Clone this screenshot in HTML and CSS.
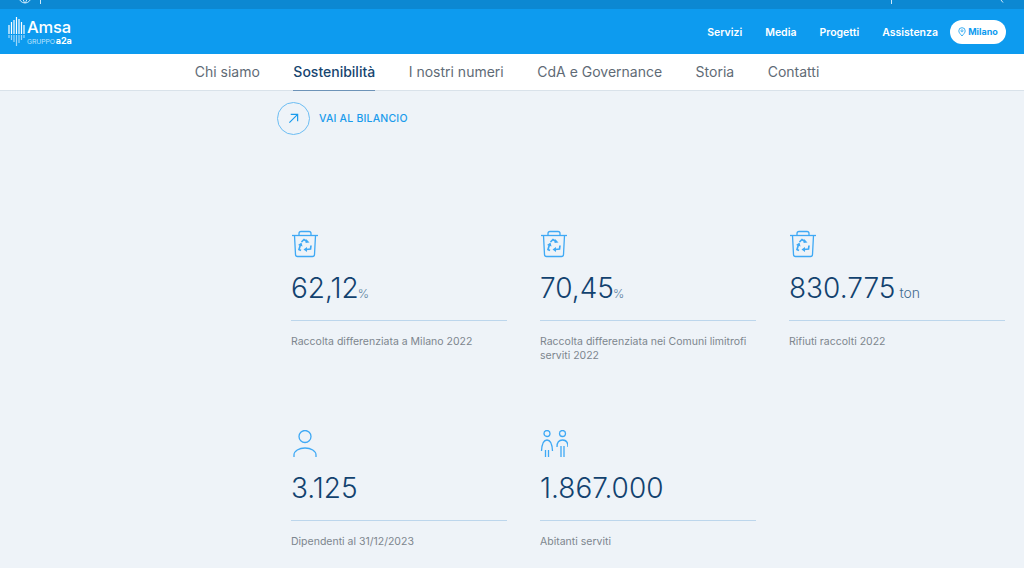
FILE: index.html
```html
<!DOCTYPE html>
<html lang="it">
<head>
<meta charset="utf-8">
<title>Amsa - Sostenibilità</title>
<link rel="stylesheet" href="styles.css">
</head>
<body>
<div class="topbar">
  <div class="topbar-left">
    <svg class="globe" viewBox="0 0 14 14" width="14" height="14"><g transform="translate(0,-10)" fill="none" stroke="#cfe9fb" stroke-width="1"><circle cx="7" cy="7" r="6"/><path d="M1 7h12M7 1c-3 4-3 8 0 12M7 1c3 4 3 8 0 12"/></g></svg>
    <span class="tick"></span>
  </div>
  <div class="topbar-right">
    <span class="tick"></span>
    <svg class="search" viewBox="0 0 12 4" width="12" height="4"><path d="M5 0l2 2.500" fill="none" stroke="#cfe9fb" stroke-width="1"/></svg>
  </div>
</div>
<header class="header">
  <a class="logo">
    <svg class="logo-mark" viewBox="0 0 17 30" width="17" height="30">
      <g stroke="#fff" stroke-width="1.200" fill="none">
        <path d="M1 8v9M3.500 5v12M6 3v14M8.500 0v17M11 2v15M13.500 5v12M16 8v9"/>
        <path opacity=".6" d="M1 18v3M3.500 18v5M6 18v7M8.500 18v11M11 18v8M13.500 18v5M16 18v3"/>
      </g>
    </svg>
    <span class="logo-text">
      <span class="logo-name">Amsa</span>
      <span class="logo-sub">GRUPPO<b>a2a</b></span>
    </span>
  </a>
  <nav class="main-nav">
    <a>Servizi</a>
    <a>Media</a>
    <a>Progetti</a>
    <a>Assistenza</a>
  </nav>
  <a class="city">
    <svg viewBox="0 0 10 12" width="8" height="10"><path d="M5 11C3 8.500 1 6.800 1 4.600a4 4 0 0 1 8 0C9 6.800 7 8.500 5 11z" fill="none" stroke="#0d9bef" stroke-width="1"/><circle cx="5" cy="4.500" r="1.300" fill="none" stroke="#0d9bef" stroke-width=".9"/></svg>
    Milano
  </a>
</header>
<nav class="subnav">
  <a>Chi siamo</a>
  <a class="active">Sostenibilità</a>
  <a>I nostri numeri</a>
  <a>CdA e Governance</a>
  <a>Storia</a>
  <a>Contatti</a>
</nav>
<main class="content">
  <a class="cta">
    <span class="cta-circle">
      <svg viewBox="0 0 12 12" width="11" height="11"><path d="M1.500 10.500L10.500 1.500M3 1.500h7.500V9" fill="none" stroke="#1a9bec" stroke-width="1.300"/></svg>
    </span>
    <span class="cta-label">VAI AL BILANCIO</span>
  </a>
  <section class="stats">
    <article class="stat">
      <svg class="stat-icon" viewBox="0 0 28 28" width="28" height="28"><use href="#bin"/></svg>
      <div class="stat-value">62,12<small class="pct">%</small></div>
      <p class="stat-label">Raccolta differenziata a Milano 2022</p>
    </article>
    <article class="stat">
      <svg class="stat-icon" viewBox="0 0 28 28" width="28" height="28"><use href="#bin"/></svg>
      <div class="stat-value">70,45<small class="pct">%</small></div>
      <p class="stat-label">Raccolta differenziata nei Comuni limitrofi serviti 2022</p>
    </article>
    <article class="stat">
      <svg class="stat-icon" viewBox="0 0 28 28" width="28" height="28"><use href="#bin"/></svg>
      <div class="stat-value">830.775<small class="unit">ton</small></div>
      <p class="stat-label">Rifiuti raccolti 2022</p>
    </article>
    <article class="stat">
      <svg class="stat-icon" viewBox="0 0 28 28" width="28" height="28"><g fill="none" stroke="#3fa9f5" stroke-width="1.300"><circle cx="14" cy="6.500" r="6"/><path d="M3 27v-2c0-4 5-7 11-7s11 3 11 7v2"/></g></svg>
      <div class="stat-value">3.125</div>
      <p class="stat-label">Dipendenti al 31/12/2023</p>
    </article>
    <article class="stat">
      <svg class="stat-icon" viewBox="0 0 28 28" width="28" height="28"><g fill="none" stroke="#3fa9f5" stroke-width="1.300"><circle cx="7" cy="3.500" r="3"/><circle cx="22.500" cy="3.500" r="3"/><path d="M1.500 21c.3-6 2-11 5.500-11s5.200 5 5.500 11"/><path d="M5.500 20v7M8.500 20v7"/><path d="M17 17c0-4 2-7 5.500-7s5.500 3 5.500 7"/><path d="M21 16v11M24 16v11"/></g></svg>
      <div class="stat-value">1.867.000</div>
      <p class="stat-label">Abitanti serviti</p>
    </article>
  </section>
</main>
<svg class="defs" width="0" height="0">
  <symbol id="bin" viewBox="0 0 28 28">
    <g fill="none" stroke="#3fa9f5" stroke-width="1.300">
      <path d="M1 5.500h26"/>
      <path d="M8 5.500V3.500Q8 1.500 10 1.500h8q2 0 2 2v2"/>
      <path d="M3.500 5.500l1 19q.1 2 2 2h15q1.900 0 2-2l1-19"/>
    </g>
    <g fill="none" stroke="#3fa9f5" stroke-width="1.700">
      <path d="M10.500 12l2.500-2.500 3 2"/>
      <path d="M10 20.500l-2-1 1.500-5"/>
      <path d="M20 15.500l-.5 3.500-4.500.5"/>
    </g>
    <g fill="#3fa9f5">
      <path d="M15 9l3.500 3.500-4 .5z"/>
      <path d="M7 15l3.500-2.500 1 4z"/>
      <path d="M16 17v5l-3.500-2.500z"/>
    </g>
  </symbol>
</svg>
</body>
</html>
```
FILE: styles.css
```css
* { box-sizing: border-box; }
html, body { margin: 0; padding: 0; }
body {
  height: 568px;
  overflow: hidden;
  background: #eef3f8;
  font-family: Inter, "Liberation Sans", sans-serif;
  color: #12426f;
}
a { color: inherit; text-decoration: none; }

.topbar {
  height: 9px;
  background: #0c88d2;
  display: flex;
  justify-content: space-between;
  overflow: hidden;
  padding: 0 16px 0 18px;
}
.topbar-left, .topbar-right { display: flex; align-items: flex-start; }
.topbar-left { gap: 8px; }
.topbar-right { gap: 104px; }
.globe { display: block; }
.tick { display: block; width: 1px; height: 4px; background: #cfe9fb; }
.search { display: block; }

.header {
  height: 45px;
  background: #0d9bef;
  display: flex;
  align-items: center;
  padding: 0 18px 0 8px;
  color: #fff;
}
.logo { display: flex; align-items: center; gap: 2px; }
.logo-mark { display: block; }
.logo-text { display: flex; flex-direction: column; padding-top: 4px; }
.logo-name { font-size: 16.500px; font-weight: 500; line-height: 15px; letter-spacing: -.2px; }
.logo-sub { display: flex; align-items: baseline; gap: 1px; font-size: 6.800px; line-height: 11px; color: #bfe4fb; letter-spacing: -.1px; }
.logo-sub b { color: #fff; font-size: 9px; font-weight: 700; line-height: 11px; }
.main-nav {
  margin-left: auto;
  padding-top: 1px;
  display: flex;
  gap: 23px;
  font-size: 10.500px;
  font-weight: 600;
}
.city {
  margin-left: 12px;
  width: 56px;
  height: 24px;
  border-radius: 12px;
  background: #fff;
  color: #0d9bef;
  display: flex;
  align-items: center;
  justify-content: center;
  gap: 2px;
  font-size: 9px;
  font-weight: 700;
}

.subnav {
  height: 37px;
  background: #fff;
  border-bottom: 1px solid #d9e2ea;
  display: flex;
  justify-content: center;
  align-items: stretch;
  gap: 33.500px;
  padding-right: 10px;
  font-size: 14px;
  color: #5f6b76;
}
.subnav a { display: flex; align-items: center; padding-bottom: 1px; }
.subnav .active {
  color: #17456f;
  font-weight: 500;
  border-bottom: 1px solid #6d93b8;
  margin-bottom: -1px;
}

.content { padding: 11px 0 0 277px; }
.cta { display: flex; align-items: center; gap: 9px; }
.cta-circle {
  width: 33px;
  height: 33px;
  border-radius: 50%;
  border: 1px solid #6cbdf3;
  display: flex;
  align-items: center;
  justify-content: center;
}
.cta-label {
  font-size: 10.500px;
  font-weight: 500;
  color: #1a9bec;
  letter-spacing: .2px;
  padding-bottom: 1px;
}

.stats {
  margin: 95px 0 0 14px;
  width: 714px;
  display: grid;
  grid-template-columns: repeat(3, 216px);
  column-gap: 33px;
  grid-template-rows: 200px auto;
}
.stat-icon { display: block; }
.stat-value {
  margin-top: 14px;
  height: 49px;
  border-bottom: 1px solid #bcd6ec;
  font-size: 28px;
  font-weight: 350;
  line-height: 33px;
  color: #12426f;
}
.pct { font-size: 12px; color: #5a7f9f; margin-left: -1px; }
.unit { font-size: 14px; color: #3f6a8f; margin-left: 4px; }
.stat-label {
  margin: 14px 0 0;
  font-size: 10.500px;
  line-height: 14px;
  color: #7d868e;
}
.defs { position: absolute; }
```
